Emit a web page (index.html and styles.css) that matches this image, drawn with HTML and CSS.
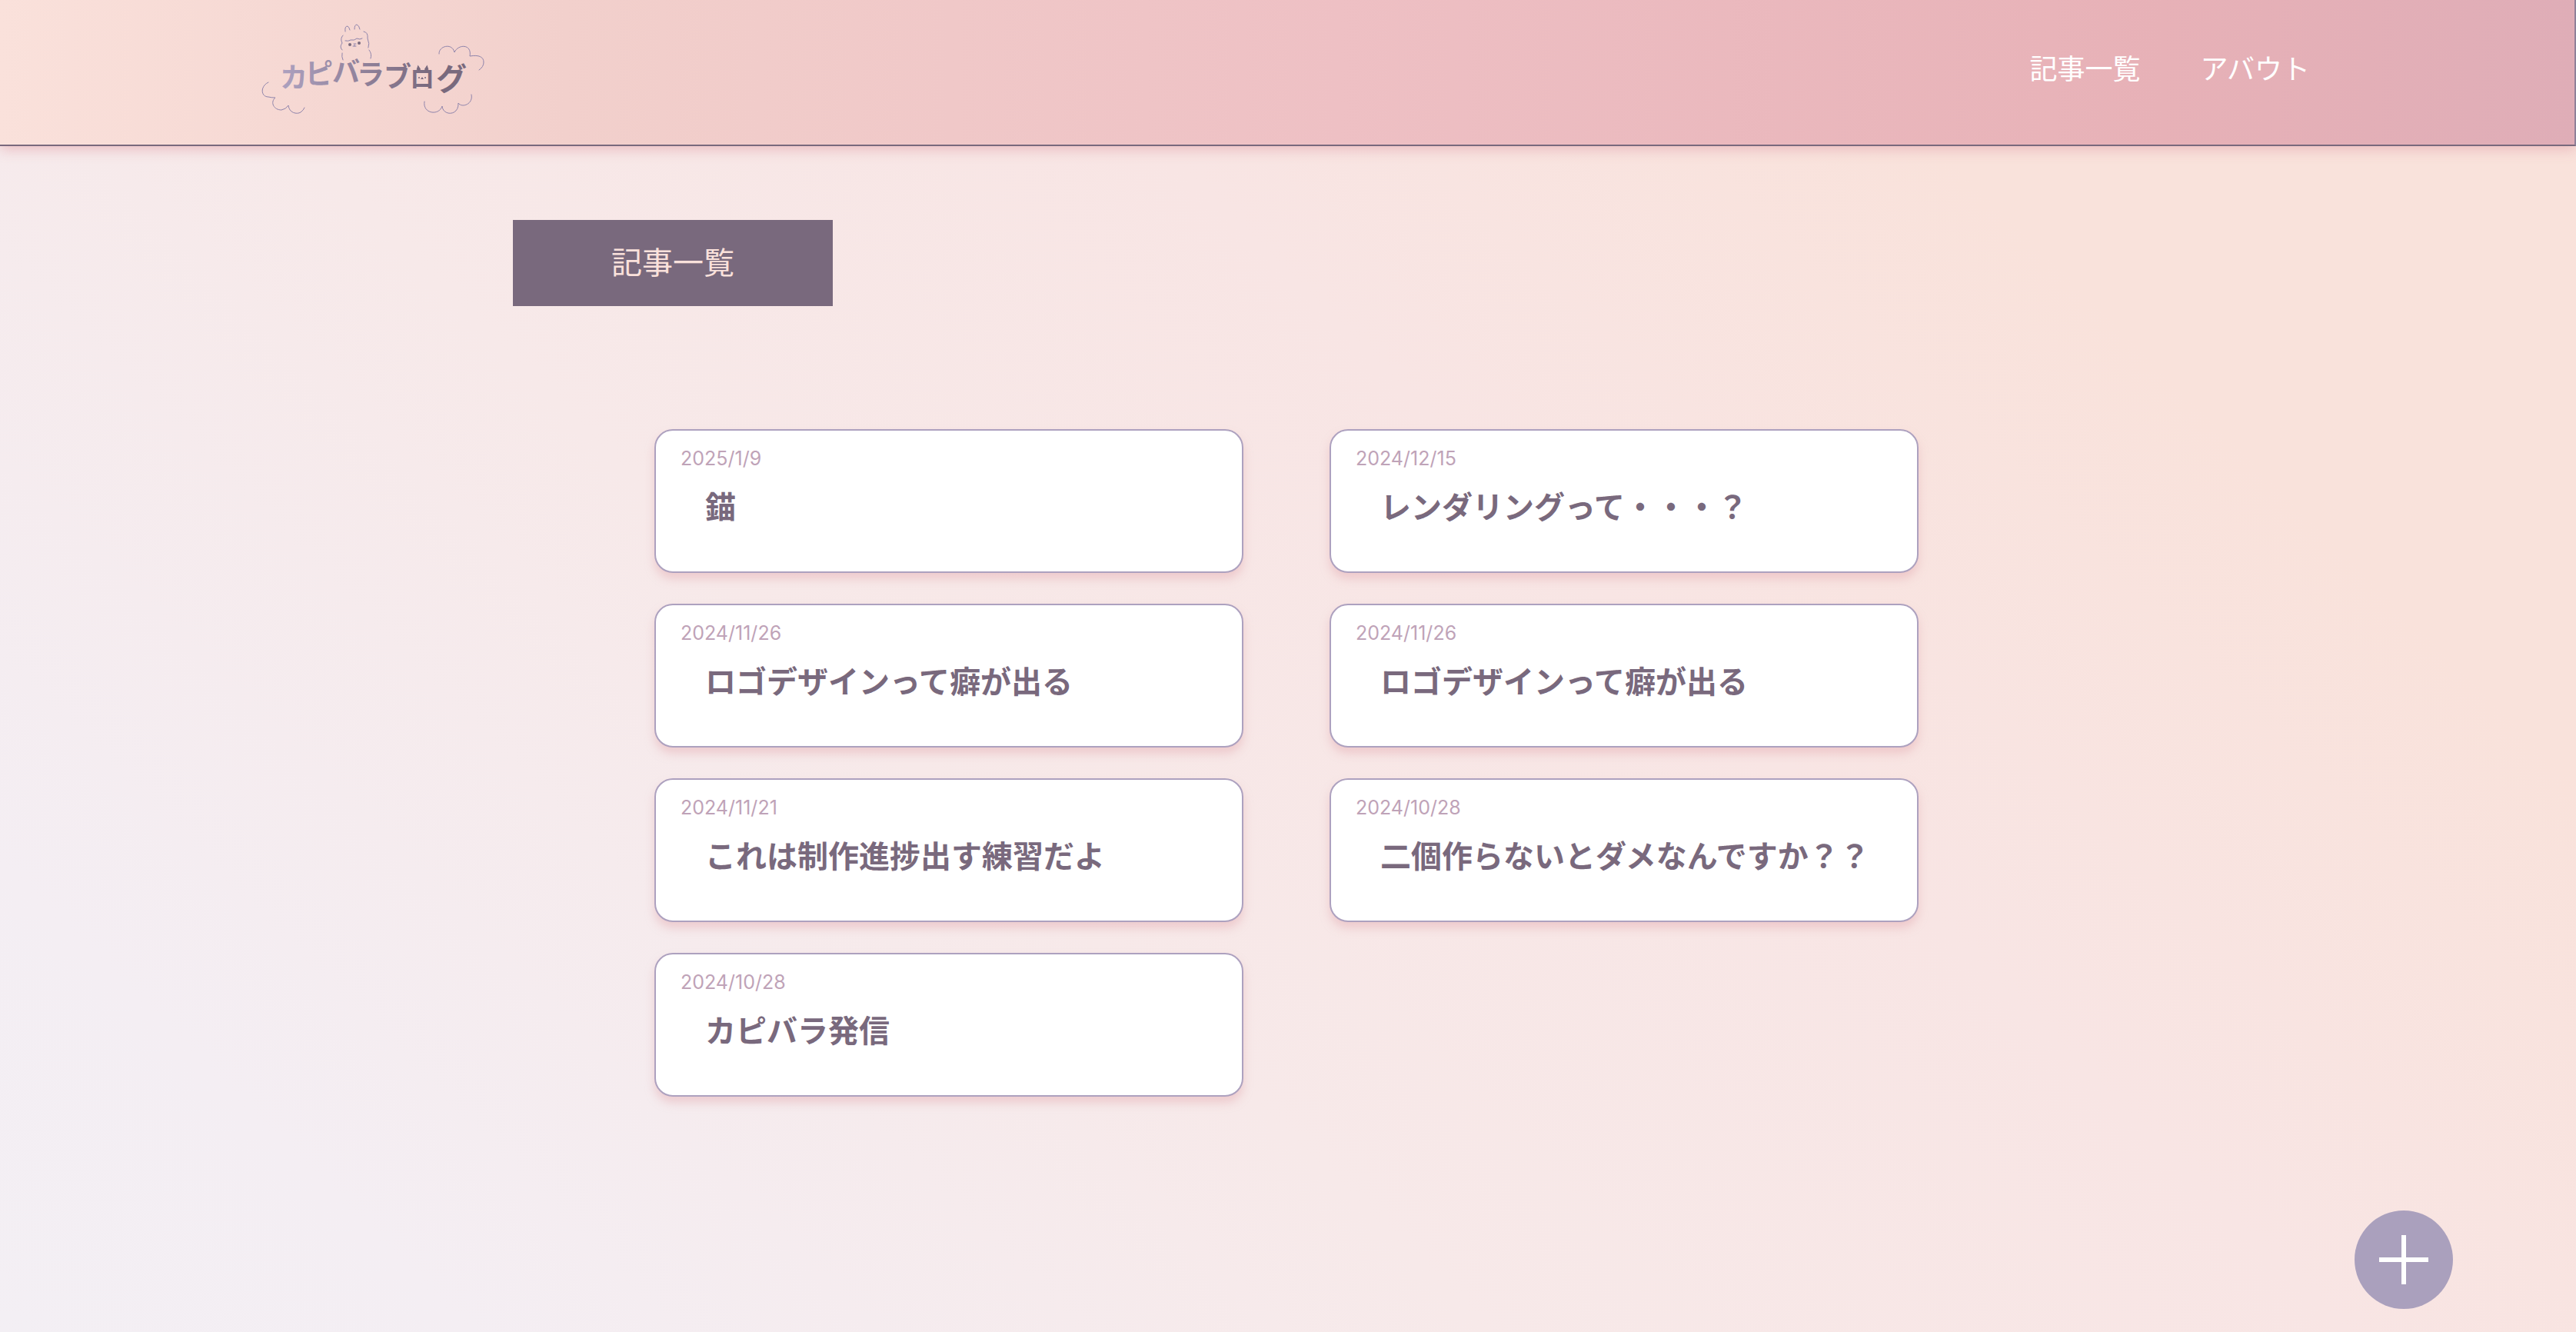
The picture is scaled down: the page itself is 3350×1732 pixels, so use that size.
FILE: index.html
```html
<!DOCTYPE html>
<html lang="ja">
<head>
<meta charset="utf-8">
<meta name="viewport" content="width=device-width, initial-scale=1">
<title>カピバラブログ</title>
<link rel="stylesheet" href="styles.css">
</head>
<body>
<header class="site-header">
  <a class="logo" href="#" aria-label="カピバラブログ">
    <svg class="logo-art" viewBox="0 0 340 150" aria-hidden="true">
      <defs>
        <linearGradient id="ink" gradientUnits="userSpaceOnUse" x1="45" y1="0" x2="290" y2="0">
          <stop offset="0" stop-color="#ada1bf"/>
          <stop offset="0.45" stop-color="#8f8099"/>
          <stop offset="0.8" stop-color="#79697d"/>
        </linearGradient>
      </defs>
      <g class="logo-line">
        <path d="M29 87C18 92 19 106 29 106Q33 107 38 107C31 113 36 123 46 123Q52 122 55 117C56 127 66 129 71 126Q75 123 76 120"/>
        <path d="M251 50C250 40 268 35 271 48C276 37 294 37 291 53C303 51 309 54 309 61Q309 67 303 71"/>
        <path d="M232 112C229 128 251 131 255 118C256 131 277 131 276 114C281 121 296 115 293 103"/>
        <path d="M129 21Q128 14 132 14Q134 15 135 19M141 18Q141 12 144 12Q147 13 148 18M153 21Q159 22 158 30Q161 37 159 42M160 45Q164 50 162 56M126 26Q122 30 125 36Q121 41 125 45M125 49Q124 54 126 58M129 33Q133 34 136 32Q141 33 144 30Q148 32 151 30"/>
        <path d="M139 40H143M141 38V40M140 37H143"/>
      </g>
      <circle cx="135" cy="38" r="2" fill="#79697d"/>
      <circle cx="147" cy="36" r="2" fill="#79697d"/>
      <text class="logo-text" fill="url(#ink)" x="44 77 112 144 179" y="94 89 87 90 93">カピバラブ</text>
      <text class="logo-text logo-text-small" fill="url(#ink)" x="213" y="94">ロ</text>
      <text class="logo-text logo-text-large" fill="url(#ink)" x="247" y="97">グ</text>
      <path d="M223 71l1-3 2 3M233 71l2-3 1 3" fill="none" stroke="#79697d" stroke-width="3"/>
      <path d="M227 83l2-3 2 3z" fill="#79697d"/>
      <circle cx="225" cy="81" r="1" fill="#79697d"/>
      <circle cx="233" cy="81" r="1" fill="#79697d"/>
    </svg>
  </a>
  <nav class="site-nav" aria-label="メイン">
    <a href="#">記事一覧</a>
    <a href="#">アバウト</a>
  </nav>
</header>
<main class="page">
  <h1 class="page-title">記事一覧</h1>
  <div class="posts">
    <a class="post" href="#"><time class="post-date">2025/1/9</time><h2 class="post-title">錨</h2></a>
    <a class="post" href="#"><time class="post-date">2024/12/15</time><h2 class="post-title">レンダリングって・・・？</h2></a>
    <a class="post" href="#"><time class="post-date">2024/11/26</time><h2 class="post-title">ロゴデザインって癖が出る</h2></a>
    <a class="post" href="#"><time class="post-date">2024/11/26</time><h2 class="post-title">ロゴデザインって癖が出る</h2></a>
    <a class="post" href="#"><time class="post-date">2024/11/21</time><h2 class="post-title">これは制作進捗出す練習だよ</h2></a>
    <a class="post" href="#"><time class="post-date">2024/10/28</time><h2 class="post-title">二個作らないとダメなんですか？？</h2></a>
    <a class="post" href="#"><time class="post-date">2024/10/28</time><h2 class="post-title">カピバラ発信</h2></a>
  </div>
</main>
<button class="add" type="button" aria-label="記事を追加">
  <svg class="add-icon" viewBox="0 0 64 64" aria-hidden="true"><path d="M32 0V64M0 32H64"/></svg>
</button>
</body>
</html>
```
FILE: styles.css
```css
* {
  box-sizing: border-box;
}

body {
  margin: 0;
  min-height: 100vh;
  color: #79697d;
  font-family: Inter, "Noto Sans CJK JP", sans-serif;
  background: linear-gradient(45deg, #f3eff4 0%, #f4eef3 12%, #f7e9e9 38%, #f8e5e4 60%, #f9e2db 80%, #f9e2db 100%);
}

a {
  color: inherit;
  text-decoration: none;
}

.site-header {
  display: flex;
  align-items: flex-start;
  justify-content: space-between;
  height: 190px;
  padding: 20px 344px 0 320px;
  border-right: 2px solid #8f8099;
  border-bottom: 2px solid #79697d;
  background: linear-gradient(90deg, #fae1db 0%, #f2d0cc 22%, #eec0c4 52%, #e7b1b7 84%, #dfadb7 100%);
  box-shadow: 0 4px 16px rgba(230, 176, 182, 0.8);
}

.logo-art {
  display: block;
  width: 340px;
  height: 150px;
}

.logo-line {
  fill: none;
  stroke: #8f84ab;
  stroke-width: 1;
  stroke-linecap: round;
}

.logo-text {
  font-size: 36px;
  font-weight: 700;
}

.logo-text-small {
  font-size: 32px;
}

.logo-text-large {
  font-size: 40px;
}

.site-nav {
  display: flex;
  gap: 78px;
  padding-top: 44px;
  color: #fff;
  font-size: 36px;
  line-height: 52px;
}

.page {
  padding: 96px 4px 80px 0;
}

.page-title {
  width: 416px;
  margin: 0 0 160px 667px;
  color: #fae1db;
  background: #79697d;
  font-size: 40px;
  font-weight: 400;
  line-height: 112px;
  text-align: center;
}

.posts {
  display: grid;
  grid-template-columns: 1fr 1fr;
  gap: 40px 112px;
  width: 1644px;
  max-width: 90%;
  margin: 0 auto;
}

.post {
  min-height: 187px;
  padding: 20px 32px;
  border: 2px solid #ada1bf;
  border-radius: 24px;
  background: #fff;
  box-shadow: 0 8px 12px rgba(230, 176, 182, 0.5);
}

.post-date {
  display: block;
  color: #bfa3b8;
  font-size: 25px;
  line-height: 32px;
}

.post-title {
  margin: 0;
  padding: 18px 0 0 32px;
  font-size: 40px;
  font-weight: 700;
  line-height: 60px;
}

.add {
  position: fixed;
  right: 160px;
  bottom: 30px;
  display: grid;
  place-items: center;
  width: 128px;
  height: 128px;
  padding: 0;
  border: 0;
  border-radius: 50%;
  background: #aaa0bd;
}

.add-icon {
  width: 64px;
  height: 64px;
  stroke: #fff;
  stroke-width: 6;
}
```
